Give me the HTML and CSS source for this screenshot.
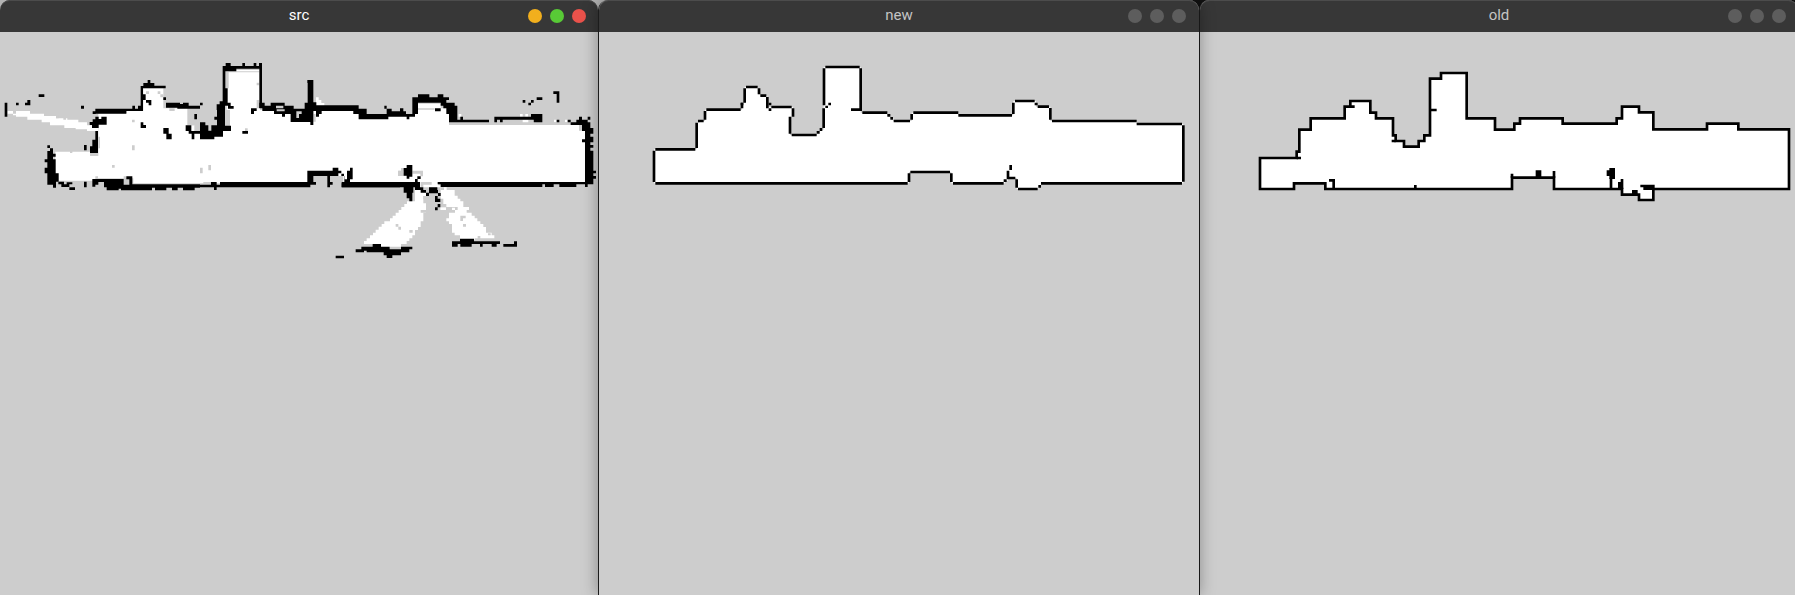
FILE: index.html
```html
<!DOCTYPE html>
<html lang="en">
<head>
<meta charset="utf-8">
<title>Map windows</title>
<link rel="stylesheet" href="styles.css">
</head>
<body>
<main class="desktop">
  <section class="window window-active" aria-label="src">
    <header class="titlebar">
      <h1 class="title">src</h1>
      <div class="controls">
        <button class="control minimize" aria-label="Minimize"></button>
        <button class="control maximize" aria-label="Maximize"></button>
        <button class="control close" aria-label="Close"></button>
      </div>
    </header>
    <svg class="map" viewBox="0 -54 1794 750" role="img" aria-label="Source occupancy map">
      <g class="free">
        <path d="M166 305H270V318H295V190H380V182H430V115H490V175H562V226H583V250H600V266H642V255H668V240H690V180H680V60H780V180H822V192H872V215H940V180H1060V192H1076V207H1162V198H1245V158H1322V175H1347V225H1746V243H1755V400H1315V412H1250V400H1030V378H930V400H400V385H290V392H175V370H166z"/>
        <path d="M22 183H39V191H48V183H90V191H132V198H168V205H202V209H235V217H261V226H278V234H295V243H261V238H227V234H193V226H150V217H125V209H82V200H48V196H39V191H22z"/>
        <path d="M948 142h8v8h8v9h9v8h-25z"/>
        <g transform="translate(900 330)">
          <path d="M345 82H370V98H378V108H370V130H378V158H370V184H362V201H354V210H345V226H337V235H328V243H320V252H303V260H269V264H243V252H192V243H200V235H210V226H219V218H227V209H236V200H245V192H253V184H270V175H278V167H287V158H296V150H304V141H313V132H321V124H345z"/>
          <path d="M362 66H414V76H422V82H440V90H464V107H473V116H481V124H490V141H507V150H500V158H515V167H524V175H532V184H541V192H550V201H558V218H575V226H583V235H541V228H533V235H524V240H480V226H464V218H456V192H447V184H439V175H447V158H465V150H456V143H465V150H473V141H439V132H430V116H422V82H387V78H370V72H362z"/>
          <path d="M421 142h17v8h-17z"/>
        </g>
        <path d="M1360 192h8v8h-8zM1376 192h8v8h-8zM1568 209h17v8h-17zM1600 209h8v8h-8zM1662 209h8v8h-8zM1695 209h8v8h-8zM1560 192h8v8h-8zM1576 192h8v8h-8z"/>
      </g>
      <g class="unknown">
        <path d="M396 209h8v8h-8zM396 286h8v15h-8zM336 345h8v8h-8zM210 301h7v8h-7zM286 379h8v8h-8zM371 379h8v25h-8zM438 124h9v8h-9zM473 124h8v8h-8zM481 133h9v9h-9zM508 175h16v8h-16zM566 184h16v42h-8v-25h-8zM295 260h5v35h-5zM168 205h8v-12h-8zM190 201h8v8h-8z"/>
        <path d="M678 64h100v3h-92v48h-8zM770 98h8v8h-8zM770 150h8v25h-8zM625 345h8v16h-8zM600 353h8v17h-8zM610 396h24v8h-24zM735 235h8v8h-8zM940 192h7v23h-7zM1194 362h8v16h-8zM940 378h42v34h-42zM998 378h26v34h-34v-24h8z"/>
        <path d="M1250 158h70v3h-70zM1348 217h142v8h-142zM1602 217h134v8h-134zM1737 225h9v17h-9zM1254 175h50v4h-50z"/>
        <g transform="translate(900 330)">
          <path d="M303 24h17v8h-9v8h9v8h-25V32h8zM337 32h32v17h-8v-8h-24zM362 66h33v8h-25v8h-8zM370 108h17v10h-17zM378 124h9v8h-9zM378 141h9v9h-9zM362 150h16v8h-16zM287 192h8v8h8v9h-8v-9h-8zM328 210h10v8h-10zM481 167h16v8h-8v8h-8zM489 192h9v8h-9zM422 82h10v8h-10zM564 220h8v6h-8z"/>
        </g>
      </g>
      <g class="wall">
        <path d="M14 158h8v42h-8zM48 158h8v8h-8zM75 158h7v-8h9v16h-16zM116 133h17v8h-17zM243 167h9v9h-9z"/>
        <path d="M278 184h8v-8h111v-9h8v9h9v-9h8V108h8v-9h13v-9h8v9h12v8h34v8h-68v18h8v17h17v16h-8v-8h-8v-8h-9v33h-50v8h-92v1h-9z"/>
        <path d="M286 200h10v7h8v-7h16v24h-24v10h-20v-9h-7v-9h9v-8h8zM286 243h8v66h-24v-20h7v-20h9zM252 285h8v16h-8z"/>
        <path d="M142 286h8v9h9v16h8v9h-8v8h8v42h9v25h-8v18h-9v-9h-17v-34h-8v-17h8v-16h-8v-9h8v-25h8v-9h-8z"/>
        <path d="M175 395h17v8h8v-6h17v6h-9v8h-24v-8h-9zM208 412h17v8h-17zM252 395h8v17h-8z"/>
        <path d="M277 387h94v17h17v-16h-9v-9h18v24h203v10h-16v8h-35v-8h-16v8h-17v-8h-17v8h-34v-8h-9v8h-93v-5h-7v5h-36v-9h-8v-16h-17v8h-9v6h-9z"/>
        <path d="M422 217h8v8h8v9h-16zM490 234h16v17h9v17h-16v-17h-9zM490 142h8v8h-8zM498 158h42v4h9v-4h17v9h34v9h-68v-3h-34zM557 226h17v17h26v8h-17v17h-8v-17h-9v-8h-9zM583 192h8v16h-8z"/>
        <g transform="translate(600 0)">
          <path d="M0 158h8v8h-8zM68 48h9v-9h15v9h35v-9h8v9h26v-9h8v9h8v-9h9v135h-8V56h-69v8h-33v51h7v43h9v10h9v8h-17v-9h-9v60h18v16h-24v17h-26v8H0v-51h16v9h9v16h9v-16h17v-17h-8v-9h8v-20h-1v-17h9v-9h9z"/>
          <path fill-rule="evenodd" d="M178 158H194V167H212V158H254V167H281V176H314V158H323V99H322V90H340V157H349V166H476V176H500V192H560V176H553V167H560V176H575V184H600V200H565V208H476V192H460V183H365V192H357V200H348V183H340V225H331V216H272V192H255V200H246V192H222V183H187V175H178zM228 167h22v8h-22zM230 178h24v6h-24zM289 184h16v8h-8v12h-8z"/>
          <path d="M153 175h17v8h-8v9h-9zM127 243h17v8h-17z"/>
          <path d="M60 396H322V362H398V353H415V362H424V371H432V388H441V362H450V353H458V388H450V396H600V412H425V400H433V378H424V370H415V378H390V396H398V404H390V412H382V378H340V396H348V404H331V412H50V420H42V412H0V404H33V396H50V404H60z"/>
        </g>
        <g transform="translate(1200 0)">
          <path d="M0 175H10V184H18V192H37V142H54V133H88V142H113V133H130V142H147V150H139V158H164V167H172V209H181V200H189V209H267V217H147V192H139V175H130V167H122V158H54V192H45V200H28V208H20V200H0zM105 175h17v9h-17z"/>
          <path d="M283 200H393V192H427V217H401V209H308V217H300V209H291V217H283zM368 150h8v8h-8zM385 158h8v8h-8zM393 150h8v8h-8zM410 142h17v8h-17zM460 124h18v34h-8v-26h-10zM470 209h8v8h-8zM503 209h9v8h-9z"/>
          <path d="M512 217H529V209H537V200H546V209H563V200H571V209H563V217H571V234H580V251H571V260H580V277H571V285H580V293H571V302H580V362H588V370H580V378H588V386H580V403H563V411H555V403H529V411H478V403H461V411H435V403H427V411H122V403H113V396H555V277H546V268H555V243H546V225H512z"/>
        </g>
        <g transform="translate(900 330)">
          <path d="M311 24H320V15H337V50H328V56H320V47H311zM352 49h10v8h-10zM345 57h8v10h-8zM125 66H360V82H370V90H378V98H387V108H378V98H362V90H345V82H340V98H337V124H328V115H320V98H311V82H125z"/>
          <path d="M387 82h25v8h2v9h8v9h-8v-8h-27zM405 108h8v8h8v10h-16zM413 132h8v10h-8v9h-8v-9h8z"/>
          <path d="M167 268H184V260H218V252H243V260H269V268H303V260H337V268H328V277H303V286H277V294H260V286H251V277H200V272H192V277H167zM107 287h25v8h-25z"/>
          <path d="M456 244H480V236H522V244H600V252H590V260H575V252H548V260H540V252H515V260H481V252H473V260H456zM610 252H642V244H651V260H610z"/>
        </g>
      </g>
    </svg>
  </section>

  <section class="window window-front" aria-label="new">
    <header class="titlebar">
      <h1 class="title">new</h1>
      <div class="controls">
        <button class="control" aria-label="Minimize"></button>
        <button class="control" aria-label="Maximize"></button>
        <button class="control" aria-label="Close"></button>
      </div>
    </header>
    <svg class="map" viewBox="-123 -69 1800 750" role="img" aria-label="New simplified map">
      <path class="room-fill" d="M42 283H170V203H178V198H195V164H306V143H314V96H354V118H362V122H382V156H459V185H450V240H530V232H539V224H551V36H662V173H742V181H750V190H760V198H815V173H955V181H1120V138H1188V155H1231V198H1490V207H1630V385H1203V393H1195V402H1130V369H1104V377H1095V385H934V351H807V385H42z"/>
      <path class="line" d="M46 283H166M170 279V203M174 198H191M195 194V168M199 164H302M306 160V143M314 143V100M318 96H353M357 100V118M361 122H379M382 126V160M394 156H455M459 160V185M450 185V236M455 240H530M551 219V160M552 151V40M556 36H659M662 40V168M633 164H662M667 173H742M761 198H810M815 194V177M820 173H955M955 181H1116M1120 177V143M1125 138H1184M1193 155H1227M1231 159V194M1236 198H1490M1490 207H1626M1630 211V380M1626 385H1203M1193 402H1134M1130 398V373M1126 369H1104V347M1112 345V330M1091 385H939M934 381V355M930 351H811M807 355V381M803 385H46M42 381V287"/>
      <path class="wall" d="M302 143h8v8h-8zM530 228h9v8h-9zM539 219h8v9h-8zM742 177h9v8h-9zM751 186h8v8h-8zM1184 143h9v8h-9zM1195 390h8v8h-8zM1091 373h9v8h-9zM556 152h8v7h-8zM565 143h8v8h-8zM386 143h8v8h-8zM386 160h8v8h-8z"/>
    </svg>
  </section>

  <section class="window" aria-label="old">
    <header class="titlebar">
      <h1 class="title">old</h1>
      <div class="controls">
        <button class="control" aria-label="Minimize"></button>
        <button class="control" aria-label="Maximize"></button>
        <button class="control" aria-label="Close"></button>
      </div>
    </header>
    <svg class="map" viewBox="-120 -84 1794 750" role="img" aria-label="Old simplified map">
      <path class="room-fill line" d="M60 294H170V275H178V209H212V175H314V140H331V123H391V158H408V175H459V226H467V243H492V260H536V243H553V226H570V56H603V39H680V175H765V209H823V191H840V175H968V191H1130V175H1146V140H1197V157H1240V208H1401V191H1495V208H1647V387H1240V420H1197V404H1146V387H942V353H816V387H256V370H162V387H60z"/>
      <path class="line" d="M170 294H183M331 140H344M570 150H590M455 243H467M267 361H281V386M526 375V386M816 353V341M942 333V353M1146 357V387M1113 355V387"/>
      <path class="wall" d="M887 331h17v20h-17zM1100 331h8v-7h17v33h-17v-9h-8zM1134 366h12v18h-12zM1176 390h17v15h-17zM1201 374h43v16h-34v-8h-9z"/>
    </svg>
  </section>
</main>
</body>
</html>
```
FILE: styles.css
```css
* {
  box-sizing: border-box;
}

body {
  margin: 0;
  background: #cdcdcd;
  font-family: Roboto, "Noto Sans", sans-serif;
  overflow: hidden;
}

.desktop {
  display: grid;
  grid-template-columns: 598fr 601fr 599fr;
  width: calc(100% + 3px);
  min-height: 100vh;
  background: linear-gradient(90deg, #b4b4b4 50%, #111111 50%);
}

.window {
  position: relative;
  display: flex;
  flex-direction: column;
  min-width: 0;
  background: #cdcdcd;
  border-radius: 10px 10px 0 0;
}

.window + .window {
  border-left: 1px solid #1c1c1c;
}

.window-front {
  z-index: 1;
  box-shadow: 0 0 16px rgba(0, 0, 0, 0.35);
}

.titlebar {
  display: grid;
  grid-template-columns: 1fr auto 1fr;
  align-items: center;
  height: 32px;
  padding: 0 12px;
  background: #373737;
  box-shadow: inset 0 1px 0 #4c4c4c;
  border-radius: 10px 10px 0 0;
}

.window-front .titlebar {
  padding: 0 13px;
}

.title {
  grid-column: 2;
  margin: 0;
  padding-bottom: 1px;
  color: #c4c4c4;
  font-size: 15px;
  font-weight: 400;
  line-height: 19px;
}

.window-active .title {
  color: #ffffff;
}

.controls {
  display: flex;
  gap: 8px;
  justify-content: flex-end;
}

.control {
  width: 14px;
  height: 14px;
  padding: 0;
  border: 0;
  border-radius: 50%;
  background: #5d5d5d;
}

.minimize {
  background: #f2af1d;
}

.maximize {
  background: #58ca36;
}

.close {
  background: #ea524b;
}

.map {
  display: block;
  width: 100%;
}

.free {
  fill: #ffffff;
}

.unknown {
  fill: #cdcdcd;
}

.wall {
  fill: #000000;
}

.line {
  fill: none;
  stroke: #000000;
  stroke-width: 8;
}

.room-fill {
  fill: #ffffff;
}
```
